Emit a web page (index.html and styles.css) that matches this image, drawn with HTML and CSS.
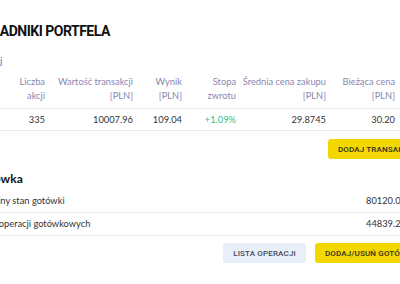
FILE: index.html
```html
<!DOCTYPE html>
<html lang="pl">
<head>
<meta charset="utf-8">
<link rel="stylesheet" href="styles.css">
</head>
<body>
<div class="page">
  <h1 class="title">SKŁADNIKI PORTFELA</h1>
  <a class="link">Więcej</a>
  <div class="table">
    <div class="row head">
      <div class="cell name">Spółka</div>
      <div class="cell">Liczba<br>akcji</div>
      <div class="cell">Wartość transakcji<br>[PLN]</div>
      <div class="cell">Wynik<br>[PLN]</div>
      <div class="cell">Stopa<br>zwrotu</div>
      <div class="cell">Średnia cena zakupu<br>[PLN]</div>
      <div class="cell">Bieżąca cena<br>[PLN]</div>
      <div class="cell"></div>
    </div>
    <div class="row body">
      <div class="cell name"></div>
      <div class="cell">335</div>
      <div class="cell">10007.96</div>
      <div class="cell">109.04</div>
      <div class="cell pos">+1.09%</div>
      <div class="cell">29.8745</div>
      <div class="cell">30.20</div>
      <div class="cell"></div>
    </div>
  </div>
  <div class="actions first">
    <button class="btn yellow">DODAJ TRANSAKCJĘ</button>
  </div>
  <h2 class="subtitle">Gotówka</h2>
  <div class="cash">
    <div class="cash-row"><span>Aktualny stan gotówki</span><span>80120.00</span></div>
    <div class="cash-row"><span>Suma operacji gotówkowych</span><span>44839.20</span></div>
  </div>
  <div class="actions last">
    <button class="btn light">LISTA OPERACJI</button>
    <button class="btn yellow">DODAJ/USUŃ GOTÓWKĘ</button>
  </div>
</div>
</body>
</html>
```
FILE: styles.css
```css
html, body {
  margin: 0;
  padding: 0;
  background: #fff;
  overflow: hidden;
}
body {
  width: 400px;
  height: 284px;
  font-family: "Lato", "Open Sans", sans-serif;
  color: #333;
}
.page {
  width: 459px;
  margin-left: -26px;
  padding-top: 22px;
}
.title {
  margin: 0 0 0 2px;
  font-family: "Roboto", "Liberation Sans", sans-serif;
  font-weight: 700;
  font-size: 14px;
  line-height: 18px;
  color: #111;
  letter-spacing: -0.5px;
}
.link {
  display: inline-block;
  margin-top: 14px;
  margin-left: -2px;
  font-size: 10px;
  line-height: 12px;
  color: #3b7ddd;
}
.table {
  margin-top: 3px;
}
.row {
  display: grid;
  grid-template-columns: 26px 45px 88px 49px 54px 90px 69px 1fr;
  border-bottom: 1px solid #ececec;
}
.cell {
  text-align: right;
  font-size: 9.3px;
  line-height: 14px;
  white-space: nowrap;
}
.cell.name {
  text-align: left;
  visibility: hidden;
}
.head .cell {
  color: #8a86b0;
  padding: 5px 0 5px;
}
.body .cell {
  color: #333;
  padding: 4px 0 3px;
}
.cell.pos {
  color: #2dbf8a;
}
.actions {
  display: flex;
  justify-content: flex-end;
  gap: 9px;
}
.actions.first {
  margin-top: 8px;
  padding-right: 5px;
}
.actions.last {
  margin-top: 7px;
  padding-right: 6px;
}
.btn {
  border: none;
  border-radius: 3px;
  font-family: "Roboto", "Open Sans", sans-serif;
  font-weight: 500;
  font-size: 8px;
  letter-spacing: 0.15px;
  height: 20px;
  padding: 0 10px;
  color: #2e2e22;
}
.btn.yellow {
  background: #f3d800;
}
.btn.light {
  background: #e9eff8;
  color: #454856;
}
.subtitle {
  margin: 12px 0 0;
  font-size: 12px;
  font-weight: 700;
  line-height: 16px;
  color: #111;
}
.cash {
  margin-top: 3px;
  padding-right: 27px;
}
.cash-row {
  display: flex;
  justify-content: space-between;
  font-size: 9.3px;
  line-height: 13px;
  padding: 4px 0 5px;
  border-bottom: 1px solid #ececec;
}
```
